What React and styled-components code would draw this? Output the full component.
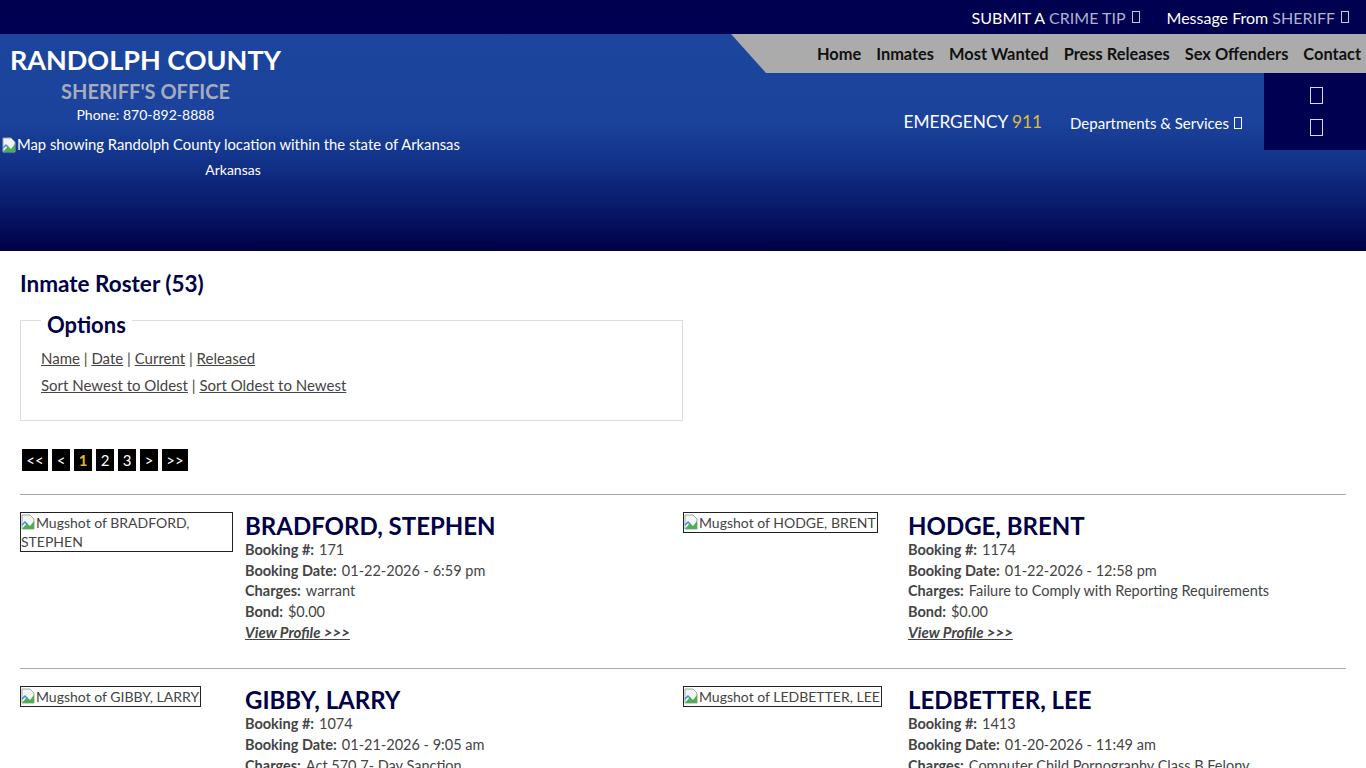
import React from "react";
import styled, { createGlobalStyle } from "styled-components";

const Global = createGlobalStyle`
  html, body { margin: 0; padding: 0; background: #fff; }
  body { font-family: Lato, "Open Sans", sans-serif; color: #444; }
  * { box-sizing: border-box; }
`;

const TopBar = styled.div`
  height: 34px;
  background: #000050;
  display: flex;
  justify-content: flex-end;
  align-items: center;
  gap: 27px;
  padding-right: 17px;
  font-size: 16px;
`;

const TopLink = styled.a`
  color: #fff;
  text-decoration: none;
  display: flex;
  align-items: center;
  gap: 4px;
  span { color: #b0b3cf; }
`;

const Tofu = styled.i`
  display: inline-block;
  width: ${p => p.$w || 8}px;
  height: ${p => p.$h || 12}px;
  border: 1px solid ${p => p.$c || "#c8c8dc"};
  margin-left: ${p => p.$ml || 2}px;
`;

const Header = styled.header`
  height: 217px;
  background: linear-gradient(to bottom, #1c459e 0%, #1b439c 40%, #12338a 58%, #08196a 80%, #000045 100%);
  display: flex;
  justify-content: space-between;
`;

const Brand = styled.div`
  display: flex;
  flex-direction: column;
  padding-top: 9px;
`;

const BrandTop = styled.div`
  width: 291px;
  display: flex;
  flex-direction: column;
  align-items: center;
`;

const County = styled.div`
  color: #fff;
  font-weight: 700;
  font-size: 27px;
  line-height: 34px;
`;

const Office = styled.div`
  color: #a6acbd;
  font-weight: 700;
  font-size: 20px;
  line-height: 28px;
`;

const Phone = styled.div`
  color: #fff;
  font-size: 14px;
  line-height: 20px;
`;

const MapBlock = styled.div`
  width: 462px;
  margin-top: 11px;
  margin-left: 2px;
  color: #fff;
  font-size: 14.8px;
`;

const MapAlt = styled.div`
  display: flex;
  align-items: center;
  white-space: nowrap;
  line-height: 17px;
`;

const MapCaption = styled.div`
  text-align: center;
  margin-top: 8px;
  font-size: 14px;
  line-height: 17px;
`;

const BrokenIcon = () => (
  <svg width="14" height="16" viewBox="0 0 14 16" style={{ flex: "none", marginRight: 1 }}>
    <path d="M1 1h8l4 4v10H1z" fill="#f4f4f4" stroke="#9aa" strokeWidth="1" />
    <path d="M1 15l5-6 3 3 4-5v8z" fill="#4caf50" />
    <path d="M1 11l3-3 2 2" fill="none" stroke="#3a8ee6" strokeWidth="1.5" />
  </svg>
);

const Right = styled.div`
  display: flex;
  flex-direction: column;
  width: 635px;
`;

const Nav = styled.nav`
  height: 39px;
  background: #ababab;
  clip-path: polygon(0 0, 100% 0, 100% 100%, 35px 100%);
  display: flex;
  justify-content: flex-end;
  align-items: center;
  gap: 15px;
  padding-right: 5px;
`;

const NavLink = styled.a`
  color: #111;
  font-weight: 700;
  font-size: 16.4px;
  text-decoration: none;
`;

const Lower = styled.div`
  display: flex;
  justify-content: flex-end;
  align-items: flex-start;
`;

const Emergency = styled.div`
  color: #fff;
  font-size: 17.3px;
  margin-top: 38px;
  margin-right: 28px;
  span { color: #e2b93b; }
`;

const Depts = styled.div`
  color: #fff;
  font-size: 15px;
  margin-top: 41px;
  margin-right: 22px;
  display: flex;
  align-items: center;
`;

const IconBox = styled.div`
  width: 102px;
  height: 77px;
  background: #000050;
  display: flex;
  flex-direction: column;
  align-items: center;
  justify-content: center;
  gap: 15px;
`;

const Main = styled.main`
  padding: 20px 20px 0 20px;
`;

const Title = styled.h1`
  margin: 0;
  font-size: 22.5px;
  font-weight: 700;
  color: #000048;
  line-height: 26px;
`;

const Fieldset = styled.fieldset`
  width: 663px;
  margin: 5px 0 0 0;
  border: 1px solid #dcdcdc;
  padding: 0 20px 25px 20px;
`;

const Legend = styled.legend`
  font-size: 22px;
  font-weight: 700;
  color: #000048;
  padding: 10px 6px 0 6px;
  line-height: 26px;
`;

const OptRow = styled.div`
  font-size: 15px;
  color: #444;
  line-height: 20px;
  margin-top: ${p => p.$mt || 0}px;
  a { color: #444; text-decoration: underline; }
`;

const Pager = styled.div`
  display: flex;
  gap: 4px;
  margin-top: 28px;
  margin-left: 2px;
`;

const PageBtn = styled.a`
  background: #000;
  color: ${p => (p.$active ? "#e0b530" : "#fff")};
  font-weight: ${p => (p.$active ? 700 : 400)};
  height: 22px;
  width: ${p => (p.$wide ? 26 : 18)}px;
  display: flex;
  align-items: center;
  justify-content: center;
  font-size: 15px;
  text-decoration: none;
`;

const Rule = styled.hr`
  border: 0;
  border-top: 1px solid #a8a8a8;
  margin: ${p => p.$mt || 0}px 0 0 0;
`;

const Row = styled.div`
  display: grid;
  grid-template-columns: 1fr 1fr;
  padding: 17px 0 26px 0;
`;

const Card = styled.div`
  display: grid;
  grid-template-columns: 213px 1fr;
  column-gap: 12px;
  align-items: start;
`;

const ImgAlt = styled.div`
  border: 1px solid #222;
  font-size: 14px;
  line-height: 19px;
  color: #444;
  justify-self: start;
  padding-right: 1px;
  svg { vertical-align: -2px; }
`;

const Name = styled.h2`
  margin: 0;
  font-size: 24px;
  font-weight: 700;
  color: #000048;
  line-height: 28px;
`;

const Line = styled.div`
  font-size: 14.5px;
  line-height: 20.6px;
  color: #444;
  b { font-weight: 700; margin-right: 5px; }
`;

const Profile = styled.a`
  font-size: 15px;
  font-weight: 700;
  font-style: italic;
  color: #444;
  text-decoration: underline;
  line-height: 20px;
  display: block;
`;

const inmates = [
  [
    { name: "BRADFORD, STEPHEN", alt: "Mugshot of BRADFORD, STEPHEN", num: "171", date: "01-22-2026 - 6:59 pm", charges: "warrant", bond: "$0.00" },
    { name: "HODGE, BRENT", alt: "Mugshot of HODGE, BRENT", num: "1174", date: "01-22-2026 - 12:58 pm", charges: "Failure to Comply with Reporting Requirements", bond: "$0.00" },
  ],
  [
    { name: "GIBBY, LARRY", alt: "Mugshot of GIBBY, LARRY", num: "1074", date: "01-21-2026 - 9:05 am", charges: "Act 570 7- Day Sanction", bond: "$0.00" },
    { name: "LEDBETTER, LEE", alt: "Mugshot of LEDBETTER, LEE", num: "1413", date: "01-20-2026 - 11:49 am", charges: "Computer Child Pornography Class B Felony", bond: "$0.00" },
  ],
];

const InmateCard = ({ d }) => (
  <Card>
    <ImgAlt><BrokenIcon />{d.alt}</ImgAlt>
    <div>
      <Name>{d.name}</Name>
      <Line><b>Booking #:</b>{d.num}</Line>
      <Line><b>Booking Date:</b>{d.date}</Line>
      <Line><b>Charges:</b>{d.charges}</Line>
      <Line><b>Bond:</b>{d.bond}</Line>
      <Profile href="#">View Profile &gt;&gt;&gt;</Profile>
    </div>
  </Card>
);

export default function App() {
  return (
    <>
      <Global />
      <TopBar>
        <TopLink href="#">SUBMIT A <span>CRIME TIP</span><Tofu /></TopLink>
        <TopLink href="#">Message From <span>SHERIFF</span><Tofu /></TopLink>
      </TopBar>
      <Header>
        <Brand>
          <BrandTop>
            <County>RANDOLPH COUNTY</County>
            <Office>SHERIFF'S OFFICE</Office>
            <Phone>Phone: 870-892-8888</Phone>
          </BrandTop>
          <MapBlock>
            <MapAlt><BrokenIcon />Map showing Randolph County location within the state of Arkansas</MapAlt>
            <MapCaption>Arkansas</MapCaption>
          </MapBlock>
        </Brand>
        <Right>
          <Nav>
            <NavLink href="#">Home</NavLink>
            <NavLink href="#">Inmates</NavLink>
            <NavLink href="#">Most Wanted</NavLink>
            <NavLink href="#">Press Releases</NavLink>
            <NavLink href="#">Sex Offenders</NavLink>
            <NavLink href="#">Contact</NavLink>
          </Nav>
          <Lower>
            <Emergency>EMERGENCY <span>911</span></Emergency>
            <Depts>Departments &amp; Services <Tofu $ml={5} $c="#fff" /></Depts>
            <IconBox>
              <Tofu $w={13} $h={17} $c="#d8d8ee" $ml={0} />
              <Tofu $w={13} $h={17} $c="#d8d8ee" $ml={0} />
            </IconBox>
          </Lower>
        </Right>
      </Header>
      <Main>
        <Title>Inmate Roster (53)</Title>
        <Fieldset>
          <Legend>Options</Legend>
          <OptRow $mt={10}>
            <a href="#">Name</a> | <a href="#">Date</a> | <a href="#">Current</a> | <a href="#">Released</a>
          </OptRow>
          <OptRow $mt={7}>
            <a href="#">Sort Newest to Oldest</a> | <a href="#">Sort Oldest to Newest</a>
          </OptRow>
        </Fieldset>
        <Pager>
          <PageBtn href="#" $wide>&lt;&lt;</PageBtn>
          <PageBtn href="#">&lt;</PageBtn>
          <PageBtn href="#" $active>1</PageBtn>
          <PageBtn href="#">2</PageBtn>
          <PageBtn href="#">3</PageBtn>
          <PageBtn href="#">&gt;</PageBtn>
          <PageBtn href="#" $wide>&gt;&gt;</PageBtn>
        </Pager>
        {inmates.map((pair, i) => (
          <React.Fragment key={i}>
            <Rule $mt={i === 0 ? 23 : 0} />
            <Row>
              <InmateCard d={pair[0]} />
              <InmateCard d={pair[1]} />
            </Row>
          </React.Fragment>
        ))}
      </Main>
    </>
  );
}
